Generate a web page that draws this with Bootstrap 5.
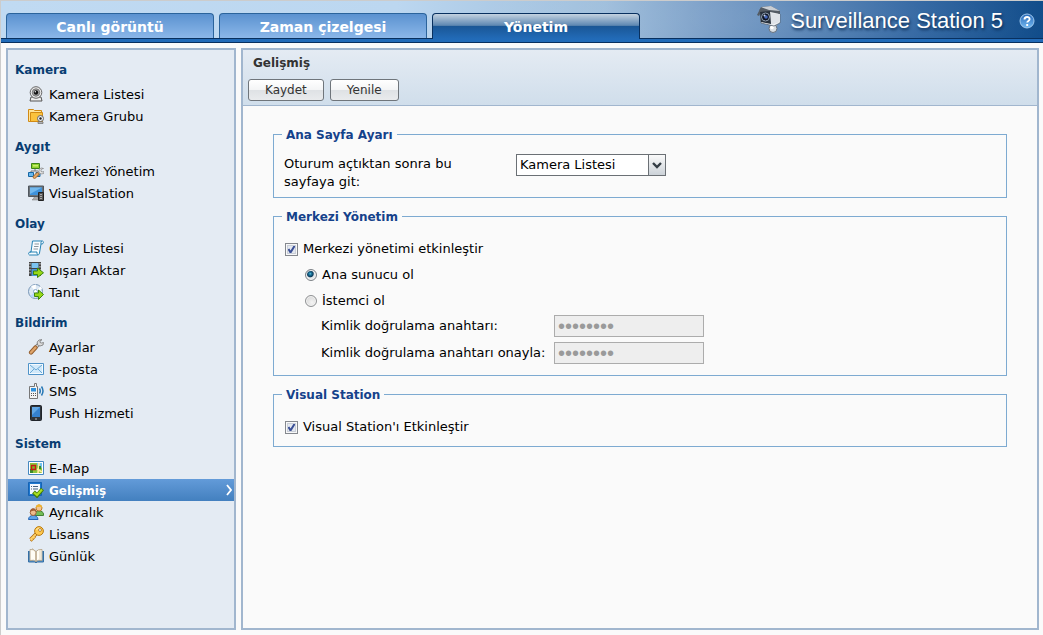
<!DOCTYPE html>
<html lang="tr">
<head>
<meta charset="utf-8">
<meta name="viewport" content="width=device-width, initial-scale=1">
<title>Surveillance Station 5</title>
<link href="https://cdn.jsdelivr.net/npm/bootstrap@5.3.0/dist/css/bootstrap.min.css" rel="stylesheet">
<style>
body { font: 13px/18px "DejaVu Sans", Verdana, sans-serif; color: #000; background: #fafafa; border-left: 1px solid #ccc; border-top: 1px solid #ccc; }
.topbar { height: 42px; padding-left: 5px; background: radial-gradient(ellipse 300px 70px at 74% 40%, #ffffff1c, #fff0), linear-gradient(90deg, #c0daf2 0, #bcd7f0 38%, #9dbddb 58%, #7399c4 68%, #4c7bb0 78%, #2c629f 88%, #0f4b89 100%); border-bottom: 1px solid #08305f; }
.topbar::after { content: ""; position: absolute; left: 0; right: 0; bottom: 0; height: 4px; background: #226bb8; border-top: 1px solid #08305f; }
.tabs { gap: 5px; padding-top: 12px; width: 634px; }
.tab { height: 25px; border: 1px solid #2b649c; border-bottom: 0; border-radius: 4px 4px 0 0; background: linear-gradient(#5b92d0, #8bb7e9); color: #fff; font-size: 14px; font-weight: bold; line-height: 26px; }
.tab:hover { color: #fff; }
.tab.active { z-index: 1; height: 26px; border-color: #08305f; background: linear-gradient(#c3d2e0 0, #5f89b3 45%, #44729f 48%, #1a5796 49%, #226bb8 100%); }
.brand-name { padding-top: 3px; font: 22px/26px "Liberation Sans", Arial, sans-serif; color: #fff; text-shadow: 1px 2px 3px #0b2c55; }
.workspace { gap: 5px; padding: 5px 4px 5px 5px; }
.panel { border: 2px solid #a1b6ce; }
.sidebar { width: 230px; background: #e4ebf3; }
.sidebar h2 { margin: 0; padding: 9px 7px 2px; font-size: 12px; line-height: 22px; font-weight: bold; color: #083d72; }
.entry { height: 22px; padding: 0 2px 0 20px; gap: 5px; color: #000; line-height: 20px; }
.entry span { padding-top: 2px; }
.entry:hover { color: #000; background: #d3e1f1; }
.entry.active { color: #fff; font-size: 12px; font-weight: bold; background: linear-gradient(#639bd9, #4380bf); }
.toolbar { height: 56px; padding: 4px 5px; background: linear-gradient(#e4ebf3, #d0deeb); border-bottom: 1px solid #a1b6ce; }
.toolbar h1 { margin: 0 0 7px 5px; font-size: 12px; line-height: 18px; font-weight: bold; color: #333; }
.tools { gap: 6px; }
.tool { height: 22px; padding: 0 16px; border: 1px solid #6f757b; border-radius: 3px; background: linear-gradient(#fff 0, #f4f5f6 48%, #dfe2e5 52%, #e9ebed); font-size: 12px; line-height: 20px; color: #333; }
.settings { padding: 19px 30px; gap: 9px; }
.group { border: 1px solid #7daad1; padding: 10px 10px 6px; }
.group legend { float: none; width: auto; margin: 0 0 0 -2px; padding: 1px 4px 0; font-size: 12px; line-height: 18px; font-weight: bold; color: #15428b; }
.caption { width: 232px; padding: 1px 50px 0 0; }
.key-caption { width: 233px; }
.choice { height: 26px; gap: 5px; padding-left: 1px; }
.roles { padding-left: 20px; }
.keys { display: grid; gap: 5px; padding: 1px 0 5px 17px; }
.page-select { width: 150px; height: 22px; padding: 0 20px 0 3px; border: 1px solid #6b7075; border-radius: 0; line-height: 20px; font-size: 13px; appearance: none; color: #000;
  background: #fff url("data:image/svg+xml,%3Csvg xmlns='http://www.w3.org/2000/svg' width='17' height='20'%3E%3Cdefs%3E%3ClinearGradient id='g' x2='0' y2='1'%3E%3Cstop stop-color='%23fafafa'/%3E%3Cstop offset='1' stop-color='%23ccd2d8'/%3E%3C/linearGradient%3E%3C/defs%3E%3Cpath fill='url(%23g)' d='M0 0h17v20H0z'/%3E%3Cpath fill='%236b7075' d='M0 0h1v20H0z'/%3E%3Cpath fill='none' stroke='%23333c44' stroke-width='2.4' d='M5 8l4 4 4-4'/%3E%3C/svg%3E") no-repeat right top; }
.tick { width: 13px; height: 13px; margin: 0; appearance: none; border: 1px solid #85888e; background: #e4e8ef; box-shadow: inset 0 0 0 1px #f8f8f8, inset 0 0 0 2px #c9ced8; }
.tick:checked { background: #e4e8ef url("data:image/svg+xml,%3Csvg xmlns='http://www.w3.org/2000/svg' width='11' height='11'%3E%3Cpath fill='none' stroke='%233a4f96' stroke-width='2' d='M2.5 5l2 3.500 4.300-7'/%3E%3C/svg%3E"); }
.dot { width: 12px; height: 12px; margin: 0; appearance: none; border: 1px solid #909294; border-radius: 50%; background: radial-gradient(circle at 60% 65%, #f4f4f4, #cfcfcf); box-shadow: inset 0 0 0 1px #f4f4f4; }
.dot:checked { border-color: #7d8287; background: radial-gradient(circle at 42% 38%, #7fd6ee 0, #1f80a8 1px, #0c3c5c 3px, #0c3c5c 3px, #e4e7ea 4px); }
.key { width: 150px; height: 22px; padding: 0 3px; border: 1px solid #acacac; background: #eee; color: #9a9a9a; font: 20px/20px "Liberation Sans", Arial, sans-serif; }
</style>
</head>
<body class="d-flex flex-column min-vh-100">
<header class="topbar position-relative d-flex justify-content-between flex-shrink-0">
  <nav class="tabs d-flex">
    <a href="#" class="tab flex-fill text-center text-decoration-none w-100">Canlı görüntü</a>
    <a href="#" class="tab flex-fill text-center text-decoration-none w-100">Zaman çizelgesi</a>
    <a href="#" class="tab active position-relative flex-fill text-center text-decoration-none w-100" aria-current="page">Yönetim</a>
  </nav>
  <div class="d-flex align-items-start pt-1 pe-2">
    <svg class="me-2" width="26" height="28" viewBox="0 0 26 28" aria-hidden="true"><path d="M15 18l5-1 1 4-3 1z" fill="#aeb6bf"/><circle cx="17" cy="23.500" r="4" fill="#d9dfe4" stroke="#66717d"/><circle cx="16" cy="22.500" r="1.800" fill="#fff"/><path d="M4 4l15 2 5 3v9l-6 3-13-3z" fill="#f2f4f6" stroke="#4e5965" stroke-width=".7"/><path d="M14 8l10 1v8l-9 3z" fill="#dfe3e8"/><path d="M1 10l4-8 10-1 9 5v3L14 7 5 7l-2 4z" fill="#535b64"/><path d="M5 2l10-1 9 5-11-1z" fill="#c9ced4"/><path d="M4 7l10-1 1 13-10-2z" fill="#26303c"/><circle cx="9.500" cy="12" r="4" fill="#0e1524" stroke="#8e9db0"/><circle cx="10" cy="12" r="1.800" fill="#4567ba"/><circle cx="8.500" cy="10.500" r="1" fill="#cbdcf2"/></svg>
    <span class="brand-name text-nowrap">Surveillance Station 5</span>
    <a href="#" class="d-block ms-3 pt-2" aria-label="Yardım"><svg class="d-block" width="16" height="16" viewBox="0 0 16 16"><defs><linearGradient id="help" x2="0" y2="1"><stop stop-color="#2868b8"/><stop offset="1" stop-color="#73b9f1"/></linearGradient></defs><circle cx="8" cy="8" r="7" fill="url(#help)" stroke="#9fc8ee"/><path d="M5.500 6.500C5.500 3.300 10.700 3.300 10.600 6.200 10.500 8 8.200 7.900 8.200 9.600M8.200 11v2" fill="none" stroke="#fff" stroke-width="1.900"/></svg></a>
  </div>
</header>

<div class="workspace d-flex flex-grow-1">
  <nav class="panel sidebar flex-shrink-0">
    <h2>Kamera</h2>
    <a href="#" class="entry d-flex align-items-center text-decoration-none"><svg width="16" height="16" viewBox="0 0 16 16"><path d="M3 11h10l1 4H2z" fill="#eee" stroke="#555"/><circle cx="8" cy="6.500" r="5.800" fill="#e9e9e9" stroke="#666"/><circle cx="8" cy="6.500" r="3.700" fill="#aaa" stroke="#777"/><circle cx="8" cy="6.500" r="2.200" fill="#111"/><circle cx="7.300" cy="5.800" r=".7" fill="#fff"/></svg><span>Kamera Listesi</span></a>
    <a href="#" class="entry d-flex align-items-center text-decoration-none"><svg width="16" height="16" viewBox="0 0 16 16"><path d="M.5 13.500v-12h5l1 1h7v11z" fill="#ffe49b" stroke="#d18a14"/><path d="M2.500 13.500v-9h12v9z" fill="#fbc23c" stroke="#d18a14"/><circle cx="12.500" cy="10.500" r="3" fill="#eee" stroke="#666"/><circle cx="12.500" cy="10.500" r="1.200" fill="#222"/><path d="M10 14h5v1.500h-5z" fill="#ddd" stroke="#666" stroke-width=".7"/></svg><span>Kamera Grubu</span></a>
    <h2>Aygıt</h2>
    <a href="#" class="entry d-flex align-items-center text-decoration-none"><svg width="16" height="16" viewBox="0 0 16 16"><path d="M3 10V8h7M7 5v3" fill="none" stroke="#777"/><path d="M3.500.5h8v5h-8z" fill="#8ed12d" stroke="#3d8516"/><path d="M5 2h5v1.500H5z" fill="#c8f06e"/><path d="M.5 9.500h5v4h-5z" fill="#69b7ec" stroke="#1667a4"/><path d="M8 9.500h4v4H8z" fill="#69b7ec" stroke="#1667a4"/><path d="M8 13l5-5" stroke="#777" stroke-width="3"/><path d="M8 13l5-5" stroke="#ddd" stroke-width="1.600"/><path d="M15.500 5.500l-2 .5-.7 2 1 1 2-.5v2l-3 .5-2-2 .5-3 2-1z" fill="#e6e6e6" stroke="#777" stroke-width=".6"/><path d="M6.500 14l3-3" stroke="#a5692c" stroke-width="3.500" stroke-linecap="round"/><path d="M6.500 14l3-3" stroke="#e0a566" stroke-width="2" stroke-linecap="round"/></svg><span>Merkezi Yönetim</span></a>
    <a href="#" class="entry d-flex align-items-center text-decoration-none"><svg width="16" height="16" viewBox="0 0 16 16"><path d="M6 11h4v2l2 2H4l2-2z" fill="#aaa" stroke="#777" stroke-width=".5"/><path d="M.5 1h15v10.500H.5z" fill="#6b7278" stroke="#50575e"/><path d="M2 2.500h12V10H2z" fill="#3e92db"/><path d="M2 2.500h12L2 9z" fill="#72b8ed"/><path d="M10.500 7.500h5v8h-5z" fill="#555" stroke="#222"/><path d="M12 9.500h2M12 11.500h2M12 13.500h2" stroke="#aaa"/></svg><span>VisualStation</span></a>
    <h2>Olay</h2>
    <a href="#" class="entry d-flex align-items-center text-decoration-none"><svg width="16" height="16" viewBox="0 0 16 16"><path d="M4.500 1h10c1.500.3 1 3-.5 3h-1l-1.500 9c-.3 1.500-1 2-2 2H1.500C0 14.500.5 12 2 12h1z" fill="#f8fcff" stroke="#2583b5"/><path d="M13 4c-.3-1 0-2.500 1-3M2 12h7c-.3 1.500.3 2.500 1 2.800" fill="none" stroke="#2583b5"/><path d="M6.500 4H11M6 6.500h4.500M5.500 9H10" stroke="#8a969e"/></svg><span>Olay Listesi</span></a>
    <a href="#" class="entry d-flex align-items-center text-decoration-none"><svg width="16" height="16" viewBox="0 0 16 16"><path d="M1 0h12v14H1z" fill="#444"/><path d="M3.500 1h7v5h-7z" fill="#7cc4f2"/><path d="M3.500 7h7v7h-7z" fill="#4a97d8"/><path d="M2 1v12M12 1v12" stroke="#ddd" stroke-dasharray="1.500 1.500"/><path d="M5.500 9h4V6l6 4.800-6 4.700v-3h-4z" fill="#98d817" stroke="#3e8510"/></svg><span>Dışarı Aktar</span></a>
    <a href="#" class="entry d-flex align-items-center text-decoration-none"><svg width="16" height="16" viewBox="0 0 16 16"><circle cx="7.500" cy="7.500" r="7" fill="#dce8f4" stroke="#7796b6"/><path d="M7.500 7.500L3 2l5-1.500zM7.500 7.500L14 5l-1-3z" fill="#fff"/><path d="M7.500 7.500L2 12l3 2z" fill="#b8d6ff"/><circle cx="7.500" cy="7.500" r="2" fill="#fff" stroke="#8baac9"/><path d="M6.500 9h4V6l5 4.500-5 5v-3h-4z" fill="#98d817" stroke="#3e8510"/></svg><span>Tanıt</span></a>
    <h2>Bildirim</h2>
    <a href="#" class="entry d-flex align-items-center text-decoration-none"><svg width="16" height="16" viewBox="0 0 16 16"><path d="M7 9l4-4" stroke="#777" stroke-width="3.500"/><path d="M7 9l4-4" stroke="#e5e5e5" stroke-width="1.800"/><path d="M14 .7l-3 .3-1.800 2 .3 3 2.500 1 3-1 .5-2.500-2 .5-1.500-.5v-1.500z" fill="#ddd" stroke="#777" stroke-width=".8"/><path d="M3 13.500l4.500-5" stroke="#925c2c" stroke-width="4.200" stroke-linecap="round"/><path d="M3 13.500l4.500-5" stroke="#dfa56b" stroke-width="2.400" stroke-linecap="round"/></svg><span>Ayarlar</span></a>
    <a href="#" class="entry d-flex align-items-center text-decoration-none"><svg width="16" height="16" viewBox="0 0 16 16"><path d="M.5 2.500h15v11H.5z" fill="#f4faff" stroke="#4f93c8"/><path d="M2 4h12v8H2z" fill="#d1e9fa"/><path d="M2 4l6 5 6-5M2 12l4-4M14 12l-4-4" fill="none" stroke="#6aa9d6"/></svg><span>E-posta</span></a>
    <a href="#" class="entry d-flex align-items-center text-decoration-none"><svg width="16" height="16" viewBox="0 0 16 16"><path d="M1.500 3.500h5V.5h2v3h1v12h-8z" fill="#f4f4f4" stroke="#777"/><path d="M3 5h5v3.500H3z" fill="#2f91dc"/><path d="M3 10.500h1m1 0h1m1 0h1M3 12.500h1m1 0h1m1 0h1" stroke="#555"/><path d="M11.500 5.500q1.500 2.500 0 5M13.500 3.500q3 4.500 0 9" fill="none" stroke="#2677b5" stroke-width="1.500"/></svg><span>SMS</span></a>
    <a href="#" class="entry d-flex align-items-center text-decoration-none"><svg width="16" height="16" viewBox="0 0 16 16"><rect x="2.500" y=".5" width="11" height="15" rx="1" fill="#30353b" stroke="#20242a"/><path d="M4 2h8v10H4z" fill="#3581cf"/><path d="M4 2h8L4 10z" fill="#62a7e5"/><path d="M7 14h2" stroke="#bbb"/></svg><span>Push Hizmeti</span></a>
    <h2>Sistem</h2>
    <a href="#" class="entry d-flex align-items-center text-decoration-none"><svg width="16" height="16" viewBox="0 0 16 16"><path d="M.5 1.500h15v13H.5z" fill="#fff" stroke="#4688bf"/><path d="M2 3h12v10H2z" fill="#8bc63c"/><path d="M9 3h5v5L9 5z" fill="#72c2ed"/><path d="M11 3l-1 10M9 9l5 3" stroke="#ffe99b" stroke-width="1.700"/><path d="M2 9h3v4H2zM11 6h2v3h-2z" fill="#3c8b29"/><path d="M3.500 5.500h4v4h-4z" fill="#83b51b" stroke="#c51d15" stroke-width="1.400"/></svg><span>E-Map</span></a>
    <a href="#" class="entry active d-flex align-items-center text-decoration-none" aria-current="page"><svg width="16" height="16" viewBox="0 0 16 16"><path d="M.5.500h13v13H.5z" fill="#1e78d0" stroke="#1463b5"/><path d="M2 2h10v8l-2 2H2z" fill="#f4f9ff"/><path d="M3 4.500h1m1 0h5M3 7h1m1 0h5" stroke="#456280"/><path d="M5.500 10l3.500 3.500L14.500 7" fill="none" stroke="#447d09" stroke-width="4"/><path d="M6 10.500l3 2.500L14 7.500" fill="none" stroke="#a9df20" stroke-width="2.200"/></svg><span>Gelişmiş</span><svg class="ms-auto" width="6" height="12" viewBox="0 0 6 12"><path d="M1 1l4 5-4 5" fill="none" stroke="#fff" stroke-width="1.800"/></svg></a>
    <a href="#" class="entry d-flex align-items-center text-decoration-none"><svg width="16" height="16" viewBox="0 0 16 16"><path d="M6.500 10c0-4 9-4 9 0v1.500h-9z" fill="#73bd57" stroke="#438237"/><circle cx="11" cy="4" r="3" fill="#f2c592" stroke="#b97b2a"/><path d="M7.700 4c0-5 6.600-5 6.600 0l-2-1.200-3 .2z" fill="#efb32e"/><path d="M.5 15.500c0-5.500 9.500-5.500 9.500 0z" fill="#5ca3eb" stroke="#2765b2"/><circle cx="5.200" cy="8.500" r="3" fill="#eebb8d" stroke="#9c6035"/><path d="M2 8c0-5 6.500-5 6.500 0l-2-1.500L4 7z" fill="#a35d31"/></svg><span>Ayrıcalık</span></a>
    <a href="#" class="entry d-flex align-items-center text-decoration-none"><svg width="16" height="16" viewBox="0 0 16 16"><path d="M8.500 7.500l-6 6M3 13l1.800 1.500M5 11l1.800 1.500" stroke="#ae6a0c" stroke-width="3.400"/><path d="M8.500 7.500l-6 6M3 13l1.500 1.200M5 11l1.500 1.200" stroke="#ffd268" stroke-width="1.800"/><circle cx="11" cy="5" r="4.400" fill="#ffc94f" stroke="#b87a12"/><path d="M8.500 4q1-2 3-2" fill="none" stroke="#fff0bb"/><circle cx="12" cy="4" r="1.500" fill="#e4ebf3" stroke="#b87a12" stroke-width=".8"/></svg><span>Lisans</span></a>
    <a href="#" class="entry d-flex align-items-center text-decoration-none"><svg width="16" height="16" viewBox="0 0 16 16"><path d="M.5 3v11H7l1 1 1-1h6.500V3" fill="#5694cb" stroke="#356fa5"/><path d="M2 1.500q4-.5 6 2v10q-2-2-6-1zM14 1.500q-4-.5-6 2v10q2-2 6-1z" fill="#fffdf5" stroke="#ae9a7b" stroke-width=".8"/><path d="M4 .5q3 2 4 4v8" fill="none" stroke="#c4b296"/><path d="M12 2v10" stroke="#e0d3bc"/></svg><span>Günlük</span></a>
  </nav>

  <main class="panel flex-grow-1">
    <div class="toolbar">
      <h1>Gelişmiş</h1>
      <div class="tools d-flex">
        <button type="button" class="tool">Kaydet</button>
        <button type="button" class="tool">Yenile</button>
      </div>
    </div>
    <form class="settings d-flex flex-column">
      <fieldset class="group">
        <legend>Ana Sayfa Ayarı</legend>
        <div class="d-flex align-items-start">
          <label class="caption" for="home">Oturum açtıktan sonra bu sayfaya git:</label>
          <select class="page-select" id="home"><option>Kamera Listesi</option></select>
        </div>
      </fieldset>
      <fieldset class="group">
        <legend>Merkezi Yönetim</legend>
        <div class="choice d-flex align-items-center"><input class="tick" type="checkbox" id="cms" checked><label for="cms">Merkezi yönetimi etkinleştir</label></div>
        <div class="roles">
          <div class="choice d-flex align-items-center"><input class="dot" type="radio" name="role" id="host" checked><label for="host">Ana sunucu ol</label></div>
          <div class="choice d-flex align-items-center"><input class="dot" type="radio" name="role" id="client"><label for="client">İstemci ol</label></div>
          <div class="keys">
            <div class="d-flex align-items-center"><label class="key-caption" for="key">Kimlik doğrulama anahtarı:</label><input class="key" type="password" id="key" value="12345678" disabled></div>
            <div class="d-flex align-items-center"><label class="key-caption" for="key2">Kimlik doğrulama anahtarı onayla:</label><input class="key" type="password" id="key2" value="12345678" disabled></div>
          </div>
        </div>
      </fieldset>
      <fieldset class="group">
        <legend>Visual Station</legend>
        <div class="choice d-flex align-items-center"><input class="tick" type="checkbox" id="vs" checked><label for="vs">Visual Station'ı Etkinleştir</label></div>
      </fieldset>
    </form>
  </main>
</div>
<script src="https://cdn.jsdelivr.net/npm/bootstrap@5.3.0/dist/js/bootstrap.bundle.min.js"></script>
</body>
</html>
